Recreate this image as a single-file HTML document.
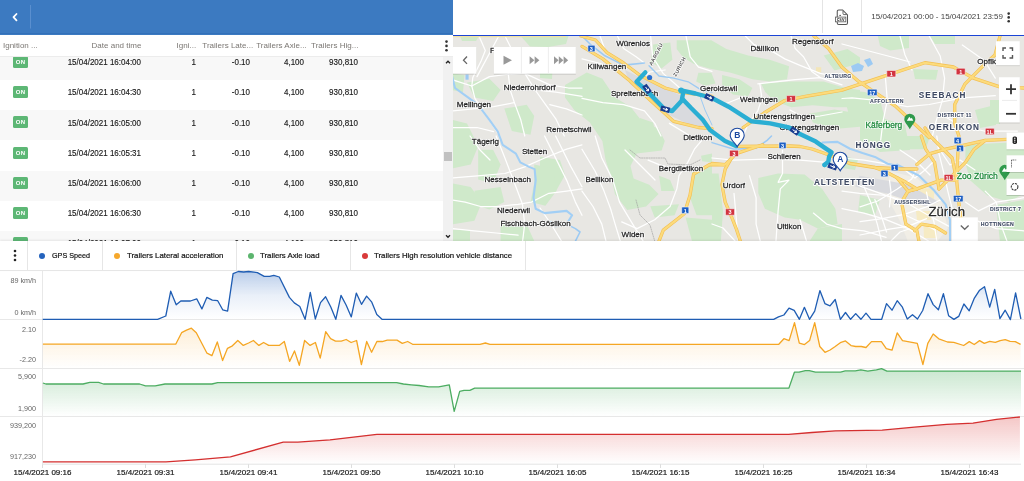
<!DOCTYPE html>
<html><head><meta charset="utf-8"><style>
*{box-sizing:border-box}
html,body{margin:0;padding:0}
body{width:1024px;height:481px;overflow:hidden;position:relative;background:#fff;font-family:"Liberation Sans", sans-serif;-webkit-font-smoothing:antialiased;}
.abs{position:absolute}
#lhead{position:absolute;left:0;top:0;width:453px;height:34.5px;background:#3c7ac1}
#tbl{position:absolute;left:0;top:34.5px;width:453px;height:206.5px;overflow:hidden;background:#fff}
.row{position:absolute;left:0;width:443px;height:30.2px}
.badge{position:absolute;left:13px;width:15px;height:12px;background:#5db775;border-radius:1.5px;color:#fff;font-size:6px;font-weight:bold;line-height:12px;text-align:center;letter-spacing:0.2px}
.cell{position:absolute;width:120px;text-align:right;font-size:8.7px;line-height:10px;color:#1a1a1a;white-space:nowrap;-webkit-text-stroke:0.15px #1a1a1a;transform:scaleX(0.92);transform-origin:100% 50%}
.hd{position:absolute;font-size:8px;line-height:10px;color:#7b7773;white-space:nowrap}
.lg{position:absolute;top:251px;font-size:8px;line-height:10px;color:#111;white-space:nowrap;-webkit-text-stroke:0.2px #111}
.dot{position:absolute;top:253px;width:6.2px;height:6.2px;border-radius:50%}
.yl{position:absolute;width:40px;text-align:right;font-size:8px;line-height:10px;color:#666;white-space:nowrap;left:-3.6px;transform:scaleX(0.9);transform-origin:100% 50%}
.xl{position:absolute;top:468.3px;width:80px;text-align:center;font-size:8px;line-height:10px;color:#1a1a1a;white-space:nowrap;-webkit-text-stroke:0.2px #1a1a1a}
</style></head><body>
<div id="root" style="position:absolute;left:0;top:0;width:1024px;height:481px;overflow:hidden;will-change:transform">
<div id="lhead"><div style="position:absolute;left:0;top:33.3px;width:453px;height:1.2px;background:#3270b9"></div>
  <svg class="abs" style="left:0;top:0" width="40" height="35"><polyline points="16.5,14 13.5,17.2 16.5,20.4" fill="none" stroke="#fff" stroke-width="1.8" stroke-linecap="round" stroke-linejoin="round"/><line x1="30.5" y1="5" x2="30.5" y2="28.5" stroke="#5a8fcf" stroke-width="1"/></svg>
</div>
<div id="tbl">
  <div style="position:absolute;left:0;top:0;width:453px;height:22px;background:#fff;border-bottom:1px solid #ececec;z-index:2">
    <div class="hd" style="left:3px;top:6px">Ignition ...</div>
    <div class="hd" style="left:91.6px;top:6px">Date and time</div>
    <div class="hd" style="left:176.6px;top:6px">Igni...</div>
    <div class="hd" style="left:202.3px;top:6px">Trailers Late...</div>
    <div class="hd" style="left:256.2px;top:6px">Trailers Axle...</div>
    <div class="hd" style="left:311.1px;top:6px">Trailers Hig...</div>
    <svg class="abs" style="left:443px;top:5px" width="8" height="13"><circle cx="3.5" cy="1.6" r="1.3" fill="#333"/><circle cx="3.5" cy="5.9" r="1.3" fill="#333"/><circle cx="3.5" cy="10.2" r="1.3" fill="#333"/></svg>
  </div>
  <div style="position:absolute;left:0;top:-34.5px;width:453px;height:481px">
  <div class="row" style="top:49.8px;background:#f8f8f8"></div>
<div class="badge" style="top:56.0px">ON</div>
<div class="cell" style="top:57.2px;left:21.4px">15/04/2021 16:04:00</div>
<div class="cell" style="top:57.2px;left:75.5px">1</div>
<div class="cell" style="top:57.2px;left:130.0px">-0.10</div>
<div class="cell" style="top:57.2px;left:184.3px">4,100</div>
<div class="cell" style="top:57.2px;left:238.3px">930,810</div>
<div class="row" style="top:80.0px;background:#ffffff"></div>
<div class="badge" style="top:86.2px">ON</div>
<div class="cell" style="top:87.4px;left:21.4px">15/04/2021 16:04:30</div>
<div class="cell" style="top:87.4px;left:75.5px">1</div>
<div class="cell" style="top:87.4px;left:130.0px">-0.10</div>
<div class="cell" style="top:87.4px;left:184.3px">4,100</div>
<div class="cell" style="top:87.4px;left:238.3px">930,810</div>
<div class="row" style="top:110.2px;background:#f8f8f8"></div>
<div class="badge" style="top:116.4px">ON</div>
<div class="cell" style="top:117.6px;left:21.4px">15/04/2021 16:05:00</div>
<div class="cell" style="top:117.6px;left:75.5px">1</div>
<div class="cell" style="top:117.6px;left:130.0px">-0.10</div>
<div class="cell" style="top:117.6px;left:184.3px">4,100</div>
<div class="cell" style="top:117.6px;left:238.3px">930,810</div>
<div class="row" style="top:140.4px;background:#ffffff"></div>
<div class="badge" style="top:146.6px">ON</div>
<div class="cell" style="top:147.8px;left:21.4px">15/04/2021 16:05:31</div>
<div class="cell" style="top:147.8px;left:75.5px">1</div>
<div class="cell" style="top:147.8px;left:130.0px">-0.10</div>
<div class="cell" style="top:147.8px;left:184.3px">4,100</div>
<div class="cell" style="top:147.8px;left:238.3px">930,810</div>
<div class="row" style="top:170.6px;background:#f8f8f8"></div>
<div class="badge" style="top:176.8px">ON</div>
<div class="cell" style="top:178.0px;left:21.4px">15/04/2021 16:06:00</div>
<div class="cell" style="top:178.0px;left:75.5px">1</div>
<div class="cell" style="top:178.0px;left:130.0px">-0.10</div>
<div class="cell" style="top:178.0px;left:184.3px">4,100</div>
<div class="cell" style="top:178.0px;left:238.3px">930,810</div>
<div class="row" style="top:200.8px;background:#ffffff"></div>
<div class="badge" style="top:207.0px">ON</div>
<div class="cell" style="top:208.2px;left:21.4px">15/04/2021 16:06:30</div>
<div class="cell" style="top:208.2px;left:75.5px">1</div>
<div class="cell" style="top:208.2px;left:130.0px">-0.10</div>
<div class="cell" style="top:208.2px;left:184.3px">4,100</div>
<div class="cell" style="top:208.2px;left:238.3px">930,810</div>
<div class="row" style="top:231.0px;background:#f8f8f8"></div>
<div class="badge" style="top:237.2px">ON</div>
<div class="cell" style="top:238.4px;left:21.4px">15/04/2021 16:07:00</div>
<div class="cell" style="top:238.4px;left:75.5px">1</div>
<div class="cell" style="top:238.4px;left:130.0px">-0.10</div>
<div class="cell" style="top:238.4px;left:184.3px">4,100</div>
<div class="cell" style="top:238.4px;left:238.3px">930,810</div>
  </div>
  <div style="position:absolute;left:443px;top:22px;width:10px;height:184px;background:#f1f1f1"></div>
  <div style="position:absolute;left:444.3px;top:117px;width:7.4px;height:9px;background:#c1c1c1"></div>
  <svg class="abs" style="left:443px;top:22px" width="10" height="184"><polyline points="3,6.2 5,4.2 7,6.2" fill="none" stroke="#222" stroke-width="1.3"/><polyline points="3,178.3 5,180.3 7,178.3" fill="none" stroke="#222" stroke-width="1.3"/></svg>
</div>

<!-- top right bar -->
<div class="abs" style="left:453px;top:0;width:571px;height:34.7px;background:#fff"></div>
<div class="abs" style="left:453px;top:34.7px;width:571px;height:1.3px;background:#1b44d6"></div>
<div class="abs" style="left:822px;top:0;width:1px;height:33px;background:#e4e4e4"></div>
<div class="abs" style="left:861px;top:0;width:1px;height:33px;background:#e4e4e4"></div>
<svg class="abs" style="left:834px;top:8.5px" width="18" height="17"><path d="M4.75,1 H8.6 L13.5,5.9 V14 Q13.5,15.5 12,15.5 H4.75 Q3.25,15.5 3.25,14 V2.5 Q3.25,1 4.75,1 Z" fill="none" stroke="#555" stroke-width="1.05"/><path d="M9,1.8 V4.6 Q9,5.6 10,5.6 H12.8" fill="none" stroke="#555" stroke-width="0.9"/><path d="M5.3,6.4 H7" stroke="#444" stroke-width="0.9"/><rect x="1.5" y="8.1" width="10.3" height="4.7" fill="#fff" stroke="#666" stroke-width="0.9"/><text x="6.65" y="11.9" font-size="4.6" text-anchor="middle" fill="#333" font-family="Liberation Sans" font-weight="bold">csv</text></svg>
<div class="abs" style="left:871.3px;top:12px;font-size:8px;line-height:10px;color:#444;white-space:nowrap">15/04/2021 00:00 - 15/04/2021 23:59</div>
<svg class="abs" style="left:1005px;top:11px" width="8" height="13"><circle cx="3.7" cy="2.6" r="1.3" fill="#333"/><circle cx="3.7" cy="6.4" r="1.3" fill="#333"/><circle cx="3.7" cy="10.2" r="1.3" fill="#333"/></svg>

<!-- MAP -->
<div id="map" class="abs" style="left:453px;top:36px;width:571px;height:205px;overflow:hidden;background:#e6e3df">
<svg width="571" height="205" viewBox="453 36 571 205" style="position:absolute;left:0;top:0">
<defs><filter id="sh" x="-20%" y="-20%" width="140%" height="140%"><feDropShadow dx="0" dy="0.6" stdDeviation="0.7" flood-opacity="0.25"/></filter></defs>
<rect x="453" y="36" width="571" height="205" fill="#e8e7e3"/>
<polygon points="520.6,36 568.5,36 566,44 548,47 530,46.4" fill="#cfe9ca" />
<polygon points="460,36 479,36 476,41 462,41" fill="#cfe9ca" />
<polygon points="452,73.4 464.5,75 463,92.2 452,90" fill="#cfe9ca" />
<polygon points="467,82.4 489.4,78.7 500.6,89.9 493.1,101.1 474.4,97.4" fill="#cfe9ca" />
<polygon points="504.3,108.6 526.7,104.8 534.2,116 530.5,134.7 511.8,131" fill="#cfe9ca" />
<polygon points="452,119.8 467,123.5 478.2,146 470.7,164.6 452,168.4" fill="#cfe9ca" />
<polygon points="540,66 552.5,68 552,79 540,78" fill="#cfe9ca" />
<polygon points="565,85 586.8,72.5 602.4,78.7 614.9,97.4 630.5,106.8 642.9,122.4 658.5,128.6 664.8,141.1 661.6,150.5 636.7,153.6 630.5,166.1 633.6,178.5 649.2,184.8 658.5,194.1 646.1,206.6 627.3,210 614.9,194.1 611.7,178.5 605.5,159.8 602.4,141.1 589.9,122.4 574.3,109.9 565,97.4" fill="#cfe9ca" />
<polygon points="540,156.7 560,160 565,175 556,191 540,188" fill="#cfe9ca" />
<polygon points="653,44.6 670.3,42.5 672.4,59.8 661.6,68.4 650.8,61.9" fill="#cfe9ca" />
<polygon points="676.7,40.3 711.3,40.3 726.4,49 748.1,55.5 769.7,59.8 789.1,66.3 787,79.2 769.7,81.4 752.4,79.2 730.8,72.7 709.2,68.4 694,64.1 683.2,57.6 676.7,49" fill="#cfe9ca" />
<polygon points="698.4,72.7 711.3,72.7 715.6,83.5 704.8,85.7 696.2,81.4" fill="#cfe9ca" />
<polygon points="722.1,74.9 739.4,79.2 752.4,87.9 748.1,96.5 732.9,94.4 722.1,85.7" fill="#cfe9ca" />
<polygon points="761,83.5 791.3,81.4 823.7,81.4 845.3,87.9 860,90 860,107.3 834.5,107.3 812.9,105.2 791.3,107.3 774,100.8 765.4,92.2" fill="#cfe9ca" />
<polygon points="808.6,113.8 834.5,109.5 860,113.8 860,126.8 834.5,128.9 812.9,122.4" fill="#cfe9ca" />
<polygon points="823.7,55.5 847.5,49 860,57.6 860,64 850,66 834.5,70.6" fill="#cfe9ca" />
<polygon points="640,118.1 653,122.4 657.3,140 640,140" fill="#cfe9ca" />
<polygon points="842.5,90 865,92 880,100 885,119 870,122 850,119" fill="#cfe9ca" />
<polygon points="860,119 885,119 905,125 910,150 880,152 860,140" fill="#cfe9ca" />
<polygon points="877.8,36 909,36 909,48 890,50.5 880,46" fill="#cfe9ca" />
<polygon points="913,69 938,70 936,79.7 915,79" fill="#cfe9ca" />
<polygon points="830,54.7 848.7,56 848.7,65 830,65" fill="#cfe9ca" />
<polygon points="990,100 1000,100 1000,124 990,124" fill="#cfe9ca" />
<polygon points="930,36 955,36 955,44 935,44" fill="#cfe9ca" />
<polygon points="975,110 995,105 996,125 980,128" fill="#cfe9ca" />
<polygon points="478.2,149.7 493.1,149.7 500.6,164.6 493.1,183.3 478.2,179.6" fill="#cfe9ca" />
<polygon points="452,183.3 470.7,187.1 481.9,202 474.4,220.7 452,224.4" fill="#cfe9ca" />
<polygon points="474.4,190.8 500.6,187.1 504.3,202 489.4,209.5 478.2,205.7" fill="#cfe9ca" />
<polygon points="534.2,164.6 552.9,168.4 556.6,190.8 545.4,205.7 530.5,202 534.2,183.3" fill="#cfe9ca" />
<polygon points="500.6,220.7 526.7,224.4 534.2,241 500.6,241" fill="#cfe9ca" />
<polygon points="452,230 470,230 470,241 452,241" fill="#cfe9ca" />
<polygon points="692.2,171.3 712,162.4 712,215.3 696.6,215.3 690,197.7" fill="#cfe9ca" />
<polygon points="701,155.8 712,153.6 712,162.4 702.1,161.3" fill="#cfe9ca" />
<polygon points="685.6,217.5 712,219.7 712,242 692.2,242" fill="#cfe9ca" />
<polygon points="650.3,206.3 679,204.3 674.6,215.3 654.7,217.5" fill="#cfe9ca" />
<polygon points="659.1,175.7 670.1,180.1 674.6,191.1 661.3,191.1" fill="#cfe9ca" />
<polygon points="758.3,177.9 778.1,173.5 804.6,174.6 822.2,188.9 835.4,208.7 837.6,224.1 817.8,228.6 800.1,219.7 784.7,217.5 764.9,208.7 758.3,193.3" fill="#cfe9ca" />
<polygon points="712,173.5 718.6,173.5 723,210.9 720.8,242 712,242" fill="#cfe9ca" />
<polygon points="817.8,228.6 842,224.1 842,242 809,242" fill="#cfe9ca" />
<polygon points="965.4,144.8 1009.5,142.6 1024,149.2 1024,193.3 1009.5,202.1 987.4,195.5 969.8,180.1 965.4,162.4" fill="#cfe9ca" />
<polygon points="892.7,136 930.1,136 925.7,149.2 897.1,149.2" fill="#cfe9ca" />
<polygon points="996,205 1024,200 1024,242 1000,242" fill="#cfe9ca" />
<polygon points="842,155 858,160 855,170 842,168" fill="#cfe9ca" />
<polygon points="860,195 880,200 875,215 858,212" fill="#cfe9ca" />
<polygon points="625,70 645,80 680,95 706.8,123.4 698.5,129 665.2,113 630,84" fill="#d9dade" />
<polygon points="890.5,171.3 916.9,177.9 941.2,199.9 947.8,228.6 936.8,242 908.1,242 899.3,219.7 886.1,195.5" fill="#f1eee6" />
<polygon points="816,67.2 821.2,67.2 821.2,72.4 816,72.4" fill="#f3e6b8" />
<polygon points="919,187.7 934,189 934,202.5 921,201" fill="#f6ebc4" />
<polygon points="916,211 931,211 931,220 917,220" fill="#f6ebc4" />
<polygon points="923.5,226 936.8,226 936.8,238 924,238" fill="#f6ebc4" />
<polygon points="859.6,175.7 908.1,184.5 938.9,202.1 925.7,206.5 886.1,193.3 855.2,186.7" fill="#d9dade" />
<polyline points="479,36 485.3,50.6 481.1,61 472.8,77.6 471.8,86 474.9,98.4 483.2,110.9 491.5,123.4 499.8,136" fill="none" stroke="#ffffff" stroke-width="1.25" stroke-linejoin="round" stroke-linecap="round" />
<polyline points="452,79.7 471.8,86" fill="none" stroke="#ffffff" stroke-width="1.25" stroke-linejoin="round" stroke-linecap="round" />
<polyline points="471.8,86 489.4,76.6 506.1,74.5 524.8,73.4 549.8,84.9 568.5,88 582,88" fill="none" stroke="#ffffff" stroke-width="1.25" stroke-linejoin="round" stroke-linecap="round" />
<polyline points="508.2,73.4 510.2,90 514.4,102.6 520.6,119.2 524.8,136" fill="none" stroke="#ffffff" stroke-width="1.25" stroke-linejoin="round" stroke-linecap="round" />
<polyline points="524.8,73.4 535.2,90 545.6,104.6 556,119.2 564.3,136" fill="none" stroke="#ffffff" stroke-width="1.25" stroke-linejoin="round" stroke-linecap="round" />
<polyline points="452,110.9 472.8,108.8 493.6,106.7 514.4,102.6" fill="none" stroke="#ffffff" stroke-width="1.25" stroke-linejoin="round" stroke-linecap="round" />
<polyline points="535.2,90 556,92.2 582,96.3" fill="none" stroke="#ffffff" stroke-width="1.25" stroke-linejoin="round" stroke-linecap="round" />
<polyline points="452,127.5 477,127.5 493.6,131.7" fill="none" stroke="#ffffff" stroke-width="1.25" stroke-linejoin="round" stroke-linecap="round" />
<polyline points="549.8,104.6 566.4,108.8 582,115" fill="none" stroke="#ffffff" stroke-width="1.25" stroke-linejoin="round" stroke-linecap="round" />
<polyline points="498.8,36 477,76.6" fill="none" stroke="#ffffff" stroke-width="1.25" stroke-linejoin="round" stroke-linecap="round" />
<polyline points="505,36 512,50 520,60" fill="none" stroke="#ffffff" stroke-width="1.25" stroke-linejoin="round" stroke-linecap="round" />
<polyline points="617.4,36 623.6,48.5 636.1,56.8 644.4,63" fill="none" stroke="#ffffff" stroke-width="1.25" stroke-linejoin="round" stroke-linecap="round" />
<polyline points="582,58.9 598.6,63 619.4,70.3" fill="none" stroke="#ffffff" stroke-width="1.25" stroke-linejoin="round" stroke-linecap="round" />
<polyline points="582,98.4 602.8,102.6 623.6,104.6 644.4,110.9 654.8,123.4 661,136" fill="none" stroke="#ffffff" stroke-width="1.25" stroke-linejoin="round" stroke-linecap="round" />
<polyline points="650.6,36 652.7,56.8 663.1,73.4 679.8,88" fill="none" stroke="#ffffff" stroke-width="1.25" stroke-linejoin="round" stroke-linecap="round" />
<polyline points="686,36 690.2,56.8 698.5,67.2 712,71.4" fill="none" stroke="#ffffff" stroke-width="1.25" stroke-linejoin="round" stroke-linecap="round" />
<polyline points="669.4,123.4 690.2,136" fill="none" stroke="#ffffff" stroke-width="1.25" stroke-linejoin="round" stroke-linecap="round" />
<polyline points="600,36 605,50 620,62" fill="none" stroke="#ffffff" stroke-width="1.25" stroke-linejoin="round" stroke-linecap="round" />
<polyline points="640,80 650,72 665,70" fill="none" stroke="#ffffff" stroke-width="1.25" stroke-linejoin="round" stroke-linecap="round" />
<polyline points="745.3,36 753.6,44.3 774.4,52.6 784.8,58.9 799.4,65.1 820.2,73.4 842,77.6" fill="none" stroke="#ffffff" stroke-width="1.25" stroke-linejoin="round" stroke-linecap="round" />
<polyline points="757.8,83.8 795.2,79.7 820.2,77.6 842,84.9" fill="none" stroke="#ffffff" stroke-width="1.25" stroke-linejoin="round" stroke-linecap="round" />
<polyline points="759.8,83.8 761.9,98.4 757.8,110.9 747.4,125.4 743.2,136" fill="none" stroke="#ffffff" stroke-width="1.25" stroke-linejoin="round" stroke-linecap="round" />
<polyline points="791,36 795.2,48.5 803.5,56.8 811.8,71.4 820.2,77.6" fill="none" stroke="#ffffff" stroke-width="1.25" stroke-linejoin="round" stroke-linecap="round" />
<polyline points="712,100 725,104 735,100 745,96" fill="none" stroke="#ffffff" stroke-width="1.25" stroke-linejoin="round" stroke-linecap="round" />
<polyline points="790,110 805,118 820,116 842,112" fill="none" stroke="#ffffff" stroke-width="1.25" stroke-linejoin="round" stroke-linecap="round" />
<polyline points="885.1,73.7 887.3,100.1 882.9,122.2 880.7,140" fill="none" stroke="#ffffff" stroke-width="1.25" stroke-linejoin="round" stroke-linecap="round" />
<polyline points="842,98.5 852,97.9 874.1,100.1 907.2,106.7 929.2,104.5 962.3,97.9 995.3,95.7" fill="none" stroke="#ffffff" stroke-width="1.25" stroke-linejoin="round" stroke-linecap="round" />
<polyline points="929.2,36 940.2,56 944.6,78.1 942.4,100.1 935.8,122.2 931.4,140" fill="none" stroke="#ffffff" stroke-width="1.25" stroke-linejoin="round" stroke-linecap="round" />
<polyline points="962.3,45 984.3,60.5 995.3,78.1" fill="none" stroke="#ffffff" stroke-width="1.25" stroke-linejoin="round" stroke-linecap="round" />
<polyline points="946.8,117.8 962.3,126.6 984.3,131 1017.4,131" fill="none" stroke="#ffffff" stroke-width="1.25" stroke-linejoin="round" stroke-linecap="round" />
<polyline points="842,44 865,50 888,56 910,62" fill="none" stroke="#ffffff" stroke-width="1.25" stroke-linejoin="round" stroke-linecap="round" />
<polyline points="900,36 905,55 912,70" fill="none" stroke="#ffffff" stroke-width="1.25" stroke-linejoin="round" stroke-linecap="round" />
<polyline points="452,177.9 480.6,175.7 504.9,173.5 524.7,166.9 544.6,158 566.6,149.2 582,144.8" fill="none" stroke="#ffffff" stroke-width="1.25" stroke-linejoin="round" stroke-linecap="round" />
<polyline points="496.1,136 504.9,158 515.9,186.7 522.5,204.3 524.7,224.1 522.5,242" fill="none" stroke="#ffffff" stroke-width="1.25" stroke-linejoin="round" stroke-linecap="round" />
<polyline points="452,199.9 465.2,202.1 480.6,206.5 498.3,206.5 518.1,204.3 531.3,202.1 548.9,193.3 566.6,191.1 582,188.9" fill="none" stroke="#ffffff" stroke-width="1.25" stroke-linejoin="round" stroke-linecap="round" />
<polyline points="544.6,136 553.4,153.6 566.6,180.1 575.4,202.1 582,215.3" fill="none" stroke="#ffffff" stroke-width="1.25" stroke-linejoin="round" stroke-linecap="round" />
<polyline points="555.6,136 571,166.9 582,186.7" fill="none" stroke="#ffffff" stroke-width="1.25" stroke-linejoin="round" stroke-linecap="round" />
<polyline points="452,228.6 474,230.8 496.1,233 518.1,235.2" fill="none" stroke="#ffffff" stroke-width="1.25" stroke-linejoin="round" stroke-linecap="round" />
<polyline points="540,208 551,224 562,242" fill="none" stroke="#ffffff" stroke-width="1.25" stroke-linejoin="round" stroke-linecap="round" />
<polyline points="470,136 480,150 490,160" fill="none" stroke="#ffffff" stroke-width="1.25" stroke-linejoin="round" stroke-linecap="round" />
<polyline points="582,149.2 595.2,171.3 604,191.1 610.6,208.7 615.1,224.1 620.6,242" fill="none" stroke="#ffffff" stroke-width="1.25" stroke-linejoin="round" stroke-linecap="round" />
<polyline points="595.2,136 601.8,158 612.9,180.1 619.5,202.1 632.7,224.1 643.7,242" fill="none" stroke="#ffffff" stroke-width="1.25" stroke-linejoin="round" stroke-linecap="round" />
<polyline points="582,191.1 593,206.5 601.8,224.1 606.2,242" fill="none" stroke="#ffffff" stroke-width="1.25" stroke-linejoin="round" stroke-linecap="round" />
<polyline points="621.7,221.9 637.1,228.6 654.7,219.7 670.1,206.5 676.8,188.9 679,175.7 687.8,162.4 694.4,149.2 705.4,136" fill="none" stroke="#ffffff" stroke-width="1.25" stroke-linejoin="round" stroke-linecap="round" />
<polyline points="648.1,160.2 659.1,164.6 674.6,169.1 692.2,171.3" fill="none" stroke="#ffffff" stroke-width="1.25" stroke-linejoin="round" stroke-linecap="round" />
<polyline points="625,150 635,160 645,170 655,180" fill="none" stroke="#ffffff" stroke-width="1.25" stroke-linejoin="round" stroke-linecap="round" />
<polyline points="782.5,150 782.5,173.5 778.1,182.3 789,180.1 780.3,188.9 778.1,210.9 775.9,242" fill="none" stroke="#ffffff" stroke-width="1.25" stroke-linejoin="round" stroke-linecap="round" />
<polyline points="712,158 734,160.2 767.1,159.1 800.1,160.2 826.6,162.4 842,166.9" fill="none" stroke="#ffffff" stroke-width="1.25" stroke-linejoin="round" stroke-linecap="round" />
<polyline points="749.5,175.7 756.1,197.7 756.1,224.1 760.5,242" fill="none" stroke="#ffffff" stroke-width="1.25" stroke-linejoin="round" stroke-linecap="round" />
<polyline points="734,193.3 738.4,242" fill="none" stroke="#ffffff" stroke-width="1.25" stroke-linejoin="round" stroke-linecap="round" />
<polyline points="813.4,213.1 826.6,224.1 842,228.6" fill="none" stroke="#ffffff" stroke-width="1.25" stroke-linejoin="round" stroke-linecap="round" />
<polyline points="800.1,219.7 806.8,242" fill="none" stroke="#ffffff" stroke-width="1.25" stroke-linejoin="round" stroke-linecap="round" />
<polyline points="712,224 723,228 736,242" fill="none" stroke="#ffffff" stroke-width="1.25" stroke-linejoin="round" stroke-linecap="round" />
<polyline points="842,158 864,160.2 890.5,164.6" fill="none" stroke="#ffffff" stroke-width="1.25" stroke-linejoin="round" stroke-linecap="round" />
<polyline points="842,191.1 859.6,193.3 886.1,195.5 908.1,202.1" fill="none" stroke="#ffffff" stroke-width="1.25" stroke-linejoin="round" stroke-linecap="round" />
<polyline points="842,208.7 864,213.1 886.1,219.7 908.1,228.6 930.1,242" fill="none" stroke="#ffffff" stroke-width="1.25" stroke-linejoin="round" stroke-linecap="round" />
<polyline points="864,186.7 870.6,202.1 877.3,224.1 881.7,242" fill="none" stroke="#ffffff" stroke-width="1.25" stroke-linejoin="round" stroke-linecap="round" />
<polyline points="842,228.6 864,230.8 886.1,237.4" fill="none" stroke="#ffffff" stroke-width="1.25" stroke-linejoin="round" stroke-linecap="round" />
<polyline points="965.4,202.1 978.6,210.9 996.3,202.1 1024,197.7" fill="none" stroke="#ffffff" stroke-width="1.25" stroke-linejoin="round" stroke-linecap="round" />
<polyline points="974.2,219.7 996.3,228.6 1024,230.8" fill="none" stroke="#ffffff" stroke-width="1.25" stroke-linejoin="round" stroke-linecap="round" />
<polyline points="936.8,136 939,153.6 943.4,171.3 947.8,191.1 952.2,208.7" fill="none" stroke="#ffffff" stroke-width="1.25" stroke-linejoin="round" stroke-linecap="round" />
<polyline points="985.2,191.1 996.3,202.1 1000.7,224.1 1007.3,242" fill="none" stroke="#ffffff" stroke-width="1.25" stroke-linejoin="round" stroke-linecap="round" />
<polyline points="900,150 915,160 930,175" fill="none" stroke="#ffffff" stroke-width="1.25" stroke-linejoin="round" stroke-linecap="round" />
<polyline points="905,215 920,222 935,230" fill="none" stroke="#ffffff" stroke-width="1.25" stroke-linejoin="round" stroke-linecap="round" />
<polyline points="890,242 900,232 912,228" fill="none" stroke="#ffffff" stroke-width="1.25" stroke-linejoin="round" stroke-linecap="round" />
<polyline points="860,186.2 889.5,196.6 908.7,204 926.5,214.3 948.6,226.1" fill="none" stroke="#ffffff" stroke-width="1.25" stroke-linejoin="round" stroke-linecap="round" />
<polyline points="860,206.9 877.7,201 896.9,189.2 911.7,178.9 916.1,170" fill="none" stroke="#ffffff" stroke-width="1.25" stroke-linejoin="round" stroke-linecap="round" />
<polyline points="860,221.7 882.2,218.7 904.3,214.3 926.5,206.9 941.2,199.5" fill="none" stroke="#ffffff" stroke-width="1.25" stroke-linejoin="round" stroke-linecap="round" />
<polyline points="860,235 889.5,229.1 908.7,226.1 926.5,218.7" fill="none" stroke="#ffffff" stroke-width="1.25" stroke-linejoin="round" stroke-linecap="round" />
<polyline points="889.5,180.3 891,192.2 889.5,206.9" fill="none" stroke="#ffffff" stroke-width="1.25" stroke-linejoin="round" stroke-linecap="round" />
<polyline points="874.8,199.5 880.7,214.3 886.6,232" fill="none" stroke="#ffffff" stroke-width="1.25" stroke-linejoin="round" stroke-linecap="round" />
<polyline points="926.5,192.2 929.4,206.9 933.9,221.7 936.8,241" fill="none" stroke="#ffffff" stroke-width="1.25" stroke-linejoin="round" stroke-linecap="round" />
<polyline points="940,150 950,165 960,160 975,170" fill="none" stroke="#ffffff" stroke-width="1.25" stroke-linejoin="round" stroke-linecap="round" />
<polyline points="905,170 915,178 925,170 935,160" fill="none" stroke="#ffffff" stroke-width="1.25" stroke-linejoin="round" stroke-linecap="round" />
<polyline points="630,150 640,158 665,158 668,164 690,165 700,160" fill="none" stroke="#9a9a9a" stroke-width="0.6" stroke-linejoin="round" stroke-linecap="round" stroke-dasharray="1.2,1.2"/>
<polyline points="636,200 640,215 650,225 655,242" fill="none" stroke="#9a9a9a" stroke-width="0.6" stroke-linejoin="round" stroke-linecap="round" stroke-dasharray="1.2,1.2"/>
<polyline points="452,76 455,88 466.6,96.3 478.2,104.8 489.4,119.8 497.8,131.7 502.7,144.8 515.9,153.6 520.3,162.4 529.1,166.9 534.6,169.1 535.7,180.1 533.5,197.7 535.7,208.7 544.6,213.1 566.6,210.9 572.1,215.3 566.6,224.1 555.6,226.3 551.2,221.9" fill="none" stroke="#a2cff5" stroke-width="2.1" stroke-linejoin="round" stroke-linecap="round" />
<polyline points="566.6,224.1 575.4,228.6 580,232 575,242" fill="none" stroke="#9ccaf3" stroke-width="1.6" stroke-linejoin="round" stroke-linecap="round" />
<polyline points="582,36 590.3,44.3 604.9,55.8 623.6,65.1 644.4,63" fill="none" stroke="#9ccaf3" stroke-width="1.6" stroke-linejoin="round" stroke-linecap="round" />
<polyline points="649,65.8 659,76 673.7,78.2 688.2,81.8 699.9,89.1 712,92" fill="none" stroke="#9ccaf3" stroke-width="1.3" stroke-linejoin="round" stroke-linecap="round" />
<polyline points="700,96 705,110 712,125" fill="none" stroke="#9ccaf3" stroke-width="1.0" stroke-linejoin="round" stroke-linecap="round" />
<polyline points="712,142.6 734,149.2 756.1,148.1 767.1,140.4 771.5,136" fill="none" stroke="#9ccaf3" stroke-width="1.5" stroke-linejoin="round" stroke-linecap="round" />
<polyline points="822.5,142.5 837.5,141.9 850,148.75 862.5,153.1 875,156.9 887.5,163.75 900,166.25 897.1,164.6 919.1,175.7 934.6,191.1 945.6,204.3 950,219.7 950,242" fill="none" stroke="#a2cff5" stroke-width="2.1" stroke-linejoin="round" stroke-linecap="round" />
<polygon points="851,66 858,63 864,66 862,71 853,72" fill="#9ccaf3" />
<polygon points="864,60 870,58 873,64 868,67" fill="#9ccaf3" />
<polygon points="465.5,74.5 468.6,74.5 468.6,79.7 465.5,79.7" fill="#9ccaf3" />
<polyline points="581,36 595.5,40 607,52.6 623.6,63 640.2,75.5 665.2,88 679.8,92.2 712,96.3" fill="none" stroke="#f3bf52" stroke-width="3.3" stroke-linejoin="round" stroke-linecap="round" />
<polyline points="582,46.4 602.8,58.9 629.8,80.7 650.6,100.5 673.5,121.3 698.5,127.5 712,128.6" fill="none" stroke="#f3bf52" stroke-width="3.3" stroke-linejoin="round" stroke-linecap="round" />
<polyline points="743.2,127.5 764,113 784.8,100.5 805.6,96.3 842,90.1 885,75.9 924.8,62.7 953.5,67 973.3,78.1 999.8,86.9 1024,88" fill="none" stroke="#f3bf52" stroke-width="3.3" stroke-linejoin="round" stroke-linecap="round" />
<polyline points="813.9,36 828.5,48.5 842,67.2 858.7,81.4 896.1,106.7 929.2,137.6" fill="none" stroke="#f3bf52" stroke-width="3.3" stroke-linejoin="round" stroke-linecap="round" />
<polyline points="737.8,146.3 790,146 800,146.5 812,149 825,153.5 850,163.5 875,167.5 900,169 916.9,169" fill="none" stroke="#f3bf52" stroke-width="3.3" stroke-linejoin="round" stroke-linecap="round" />
<polyline points="875,167.5 886.1,172 905.9,182.3 916.9,188.9" fill="none" stroke="#f3bf52" stroke-width="3.3" stroke-linejoin="round" stroke-linecap="round" />
<polyline points="712,163.5 725.2,164.6 736.2,153.6 762.7,144.8" fill="none" stroke="#f3bf52" stroke-width="3.3" stroke-linejoin="round" stroke-linecap="round" />
<polyline points="734,153.6 725.2,169.1 721.9,184.5 725.2,202.1 731.8,217.5 736.2,228.6 740.6,242" fill="none" stroke="#f3bf52" stroke-width="3.3" stroke-linejoin="round" stroke-linecap="round" />
<polyline points="723.8,164.9 709.8,164.5 693.6,174.2 690,195.2 684.2,213.8 663.3,230.1 658.6,242" fill="none" stroke="#f3bf52" stroke-width="3.3" stroke-linejoin="round" stroke-linecap="round" />
<polyline points="1000,36 995,55 983.8,65.1 965.1,83.8 954.7,104.6 954.7,123.3 958.9,136 958,150 956.6,180.1 958.8,202.1 961,219.7" fill="none" stroke="#f3bf52" stroke-width="3.3" stroke-linejoin="round" stroke-linecap="round" />
<polyline points="925,128 930.1,136 939,144.8 952.2,158 956.6,180.1" fill="none" stroke="#f3bf52" stroke-width="3.3" stroke-linejoin="round" stroke-linecap="round" />
<polyline points="916.9,188.9 908.1,191.1 901.5,202.1 905.9,224.1 916.9,230.8 919.1,242" fill="none" stroke="#f3bf52" stroke-width="3.3" stroke-linejoin="round" stroke-linecap="round" />
<polyline points="916.9,164.6 930.1,153.6 945.6,149.2 965.4,144.8 985.2,140.4 1007.3,139.3 1024,139.3" fill="none" stroke="#f3bf52" stroke-width="3.3" stroke-linejoin="round" stroke-linecap="round" />
<polyline points="939,188.9 952.2,175.7 965.4,162.4 974.2,149.2 985.2,140.4" fill="none" stroke="#f3bf52" stroke-width="3.3" stroke-linejoin="round" stroke-linecap="round" />
<polyline points="897.1,177.9 908.1,191.1 916.9,188.9 941.2,180.1 956.6,180.1" fill="none" stroke="#f3bf52" stroke-width="3.3" stroke-linejoin="round" stroke-linecap="round" />
<polyline points="914.7,230.8 921.3,224.1 934.6,226.3 945.6,233" fill="none" stroke="#f3bf52" stroke-width="3.3" stroke-linejoin="round" stroke-linecap="round" />
<polyline points="921.3,136 925.7,149.2 934.6,162.4 939,188.9" fill="none" stroke="#f3bf52" stroke-width="3.3" stroke-linejoin="round" stroke-linecap="round" />
<polyline points="581,36 595.5,40 607,52.6 623.6,63 640.2,75.5 665.2,88 679.8,92.2 712,96.3" fill="none" stroke="#fcdb7c" stroke-width="2.1" stroke-linejoin="round" stroke-linecap="round" />
<polyline points="582,46.4 602.8,58.9 629.8,80.7 650.6,100.5 673.5,121.3 698.5,127.5 712,128.6" fill="none" stroke="#fcdb7c" stroke-width="2.1" stroke-linejoin="round" stroke-linecap="round" />
<polyline points="743.2,127.5 764,113 784.8,100.5 805.6,96.3 842,90.1 885,75.9 924.8,62.7 953.5,67 973.3,78.1 999.8,86.9 1024,88" fill="none" stroke="#fcdb7c" stroke-width="2.1" stroke-linejoin="round" stroke-linecap="round" />
<polyline points="813.9,36 828.5,48.5 842,67.2 858.7,81.4 896.1,106.7 929.2,137.6" fill="none" stroke="#fcdb7c" stroke-width="2.1" stroke-linejoin="round" stroke-linecap="round" />
<polyline points="737.8,146.3 790,146 800,146.5 812,149 825,153.5 850,163.5 875,167.5 900,169 916.9,169" fill="none" stroke="#fcdb7c" stroke-width="2.1" stroke-linejoin="round" stroke-linecap="round" />
<polyline points="875,167.5 886.1,172 905.9,182.3 916.9,188.9" fill="none" stroke="#fcdb7c" stroke-width="2.1" stroke-linejoin="round" stroke-linecap="round" />
<polyline points="712,163.5 725.2,164.6 736.2,153.6 762.7,144.8" fill="none" stroke="#fcdb7c" stroke-width="2.1" stroke-linejoin="round" stroke-linecap="round" />
<polyline points="734,153.6 725.2,169.1 721.9,184.5 725.2,202.1 731.8,217.5 736.2,228.6 740.6,242" fill="none" stroke="#fcdb7c" stroke-width="2.1" stroke-linejoin="round" stroke-linecap="round" />
<polyline points="723.8,164.9 709.8,164.5 693.6,174.2 690,195.2 684.2,213.8 663.3,230.1 658.6,242" fill="none" stroke="#fcdb7c" stroke-width="2.1" stroke-linejoin="round" stroke-linecap="round" />
<polyline points="1000,36 995,55 983.8,65.1 965.1,83.8 954.7,104.6 954.7,123.3 958.9,136 958,150 956.6,180.1 958.8,202.1 961,219.7" fill="none" stroke="#fcdb7c" stroke-width="2.1" stroke-linejoin="round" stroke-linecap="round" />
<polyline points="925,128 930.1,136 939,144.8 952.2,158 956.6,180.1" fill="none" stroke="#fcdb7c" stroke-width="2.1" stroke-linejoin="round" stroke-linecap="round" />
<polyline points="916.9,188.9 908.1,191.1 901.5,202.1 905.9,224.1 916.9,230.8 919.1,242" fill="none" stroke="#fcdb7c" stroke-width="2.1" stroke-linejoin="round" stroke-linecap="round" />
<polyline points="916.9,164.6 930.1,153.6 945.6,149.2 965.4,144.8 985.2,140.4 1007.3,139.3 1024,139.3" fill="none" stroke="#fcdb7c" stroke-width="2.1" stroke-linejoin="round" stroke-linecap="round" />
<polyline points="939,188.9 952.2,175.7 965.4,162.4 974.2,149.2 985.2,140.4" fill="none" stroke="#fcdb7c" stroke-width="2.1" stroke-linejoin="round" stroke-linecap="round" />
<polyline points="897.1,177.9 908.1,191.1 916.9,188.9 941.2,180.1 956.6,180.1" fill="none" stroke="#fcdb7c" stroke-width="2.1" stroke-linejoin="round" stroke-linecap="round" />
<polyline points="914.7,230.8 921.3,224.1 934.6,226.3 945.6,233" fill="none" stroke="#fcdb7c" stroke-width="2.1" stroke-linejoin="round" stroke-linecap="round" />
<polyline points="921.3,136 925.7,149.2 934.6,162.4 939,188.9" fill="none" stroke="#fcdb7c" stroke-width="2.1" stroke-linejoin="round" stroke-linecap="round" />
<rect x="587.9" y="45.3" width="7.1" height="6.4" rx="0.8" fill="#1d5fc4" stroke="#fff" stroke-width="0.5"/>
<text x="591.4" y="50.7" font-size="5.5" font-weight="bold" fill="#fff" text-anchor="middle" font-family="Liberation Sans">3</text>
<rect x="786.5" y="95.6" width="9.0" height="6.4" rx="0.8" fill="#d23440" stroke="#fff" stroke-width="0.5"/>
<text x="791" y="101.0" font-size="5.5" font-weight="bold" fill="#fff" text-anchor="middle" font-family="Liberation Sans">1</text>
<rect x="886.8" y="70.5" width="9.0" height="6.4" rx="0.8" fill="#d23440" stroke="#fff" stroke-width="0.5"/>
<text x="891.3" y="75.9" font-size="5.5" font-weight="bold" fill="#fff" text-anchor="middle" font-family="Liberation Sans">1</text>
<rect x="956.2" y="68.3" width="9.0" height="6.4" rx="0.8" fill="#d23440" stroke="#fff" stroke-width="0.5"/>
<text x="960.7" y="73.7" font-size="5.5" font-weight="bold" fill="#fff" text-anchor="middle" font-family="Liberation Sans">1</text>
<rect x="867.4" y="89.2" width="9.7" height="6.4" rx="0.8" fill="#1d5fc4" stroke="#fff" stroke-width="0.5"/>
<text x="872.3" y="94.6" font-size="5.5" font-weight="bold" fill="#fff" text-anchor="middle" font-family="Liberation Sans">17</text>
<rect x="985.3" y="128.3" width="9.0" height="6.4" rx="0.8" fill="#d23440" stroke="#fff" stroke-width="0.5"/>
<text x="989.8" y="133.7" font-size="5.5" font-weight="bold" fill="#fff" text-anchor="middle" font-family="Liberation Sans">1L</text>
<rect x="954.1" y="137.3" width="7.1" height="6.4" rx="0.8" fill="#1d5fc4" stroke="#fff" stroke-width="0.5"/>
<text x="957.6" y="142.7" font-size="5.5" font-weight="bold" fill="#fff" text-anchor="middle" font-family="Liberation Sans">4</text>
<rect x="956.5" y="145.2" width="7.1" height="6.4" rx="0.8" fill="#1d5fc4" stroke="#fff" stroke-width="0.5"/>
<text x="960" y="150.6" font-size="5.5" font-weight="bold" fill="#fff" text-anchor="middle" font-family="Liberation Sans">1</text>
<rect x="891.1" y="164.4" width="7.1" height="6.4" rx="0.8" fill="#1d5fc4" stroke="#fff" stroke-width="0.5"/>
<text x="894.6" y="169.8" font-size="5.5" font-weight="bold" fill="#fff" text-anchor="middle" font-family="Liberation Sans">1</text>
<rect x="880.9" y="170.3" width="7.1" height="6.4" rx="0.8" fill="#1d5fc4" stroke="#fff" stroke-width="0.5"/>
<text x="884.4" y="175.7" font-size="5.5" font-weight="bold" fill="#fff" text-anchor="middle" font-family="Liberation Sans">3</text>
<rect x="944.1" y="174.4" width="9.0" height="6.4" rx="0.8" fill="#d23440" stroke="#fff" stroke-width="0.5"/>
<text x="948.6" y="179.8" font-size="5.5" font-weight="bold" fill="#fff" text-anchor="middle" font-family="Liberation Sans">1L</text>
<rect x="953.4" y="195.4" width="9.7" height="6.4" rx="0.8" fill="#1d5fc4" stroke="#fff" stroke-width="0.5"/>
<text x="958.2" y="200.8" font-size="5.5" font-weight="bold" fill="#fff" text-anchor="middle" font-family="Liberation Sans">17</text>
<rect x="779.0" y="142.2" width="7.1" height="6.4" rx="0.8" fill="#1d5fc4" stroke="#fff" stroke-width="0.5"/>
<text x="782.5" y="147.6" font-size="5.5" font-weight="bold" fill="#fff" text-anchor="middle" font-family="Liberation Sans">3</text>
<rect x="729.5" y="150.2" width="9.0" height="6.4" rx="0.8" fill="#d23440" stroke="#fff" stroke-width="0.5"/>
<text x="734" y="155.6" font-size="5.5" font-weight="bold" fill="#fff" text-anchor="middle" font-family="Liberation Sans">3</text>
<rect x="725.5" y="208.8" width="9.0" height="6.4" rx="0.8" fill="#d23440" stroke="#fff" stroke-width="0.5"/>
<text x="730" y="214.2" font-size="5.5" font-weight="bold" fill="#fff" text-anchor="middle" font-family="Liberation Sans">3</text>
<rect x="681.7" y="207.1" width="7.1" height="6.4" rx="0.8" fill="#1d5fc4" stroke="#fff" stroke-width="0.5"/>
<text x="685.2" y="212.5" font-size="5.5" font-weight="bold" fill="#fff" text-anchor="middle" font-family="Liberation Sans">1</text>
<text x="616.2" y="45.6" font-size="8" font-family="Liberation Sans" font-weight="normal" letter-spacing="0" text-anchor="start" fill="#fff" stroke="#fff" stroke-width="1.8" stroke-linejoin="round">Würenlos</text>
<text x="616.2" y="45.6" font-size="8" font-family="Liberation Sans" font-weight="normal" letter-spacing="0" text-anchor="start" fill="#262626" stroke="#262626" stroke-width="0.28">Würenlos</text>
<text x="587.6" y="69.3" font-size="8" font-family="Liberation Sans" font-weight="normal" letter-spacing="0" text-anchor="start" fill="#fff" stroke="#fff" stroke-width="1.8" stroke-linejoin="round">Killwangen</text>
<text x="587.6" y="69.3" font-size="8" font-family="Liberation Sans" font-weight="normal" letter-spacing="0" text-anchor="start" fill="#262626" stroke="#262626" stroke-width="0.28">Killwangen</text>
<text x="611" y="96.1" font-size="8" font-family="Liberation Sans" font-weight="normal" letter-spacing="0" text-anchor="start" fill="#fff" stroke="#fff" stroke-width="1.8" stroke-linejoin="round">Spreitenbach</text>
<text x="611" y="96.1" font-size="8" font-family="Liberation Sans" font-weight="normal" letter-spacing="0" text-anchor="start" fill="#262626" stroke="#262626" stroke-width="0.28">Spreitenbach</text>
<text x="503.8" y="90.3" font-size="8" font-family="Liberation Sans" font-weight="normal" letter-spacing="0" text-anchor="start" fill="#fff" stroke="#fff" stroke-width="1.8" stroke-linejoin="round">Niederrohrdorf</text>
<text x="503.8" y="90.3" font-size="8" font-family="Liberation Sans" font-weight="normal" letter-spacing="0" text-anchor="start" fill="#262626" stroke="#262626" stroke-width="0.28">Niederrohrdorf</text>
<text x="456.8" y="107.3" font-size="8" font-family="Liberation Sans" font-weight="normal" letter-spacing="0" text-anchor="start" fill="#fff" stroke="#fff" stroke-width="1.8" stroke-linejoin="round">Mellingen</text>
<text x="456.8" y="107.3" font-size="8" font-family="Liberation Sans" font-weight="normal" letter-spacing="0" text-anchor="start" fill="#262626" stroke="#262626" stroke-width="0.28">Mellingen</text>
<text x="546.3" y="132.2" font-size="8" font-family="Liberation Sans" font-weight="normal" letter-spacing="0" text-anchor="start" fill="#fff" stroke="#fff" stroke-width="1.8" stroke-linejoin="round">Remetschwil</text>
<text x="546.3" y="132.2" font-size="8" font-family="Liberation Sans" font-weight="normal" letter-spacing="0" text-anchor="start" fill="#262626" stroke="#262626" stroke-width="0.28">Remetschwil</text>
<text x="489.9" y="52.7" font-size="8" font-family="Liberation Sans" font-weight="normal" letter-spacing="0" text-anchor="start" fill="#fff" stroke="#fff" stroke-width="1.8" stroke-linejoin="round">F</text>
<text x="489.9" y="52.7" font-size="8" font-family="Liberation Sans" font-weight="normal" letter-spacing="0" text-anchor="start" fill="#262626" stroke="#262626" stroke-width="0.28">F</text>
<text x="471.8" y="144.3" font-size="8" font-family="Liberation Sans" font-weight="normal" letter-spacing="0" text-anchor="start" fill="#fff" stroke="#fff" stroke-width="1.8" stroke-linejoin="round">Tägerig</text>
<text x="471.8" y="144.3" font-size="8" font-family="Liberation Sans" font-weight="normal" letter-spacing="0" text-anchor="start" fill="#262626" stroke="#262626" stroke-width="0.28">Tägerig</text>
<text x="521.9" y="154.2" font-size="8" font-family="Liberation Sans" font-weight="normal" letter-spacing="0" text-anchor="start" fill="#fff" stroke="#fff" stroke-width="1.8" stroke-linejoin="round">Stetten</text>
<text x="521.9" y="154.2" font-size="8" font-family="Liberation Sans" font-weight="normal" letter-spacing="0" text-anchor="start" fill="#262626" stroke="#262626" stroke-width="0.28">Stetten</text>
<text x="484.6" y="182.4" font-size="8" font-family="Liberation Sans" font-weight="normal" letter-spacing="0" text-anchor="start" fill="#fff" stroke="#fff" stroke-width="1.8" stroke-linejoin="round">Nesselnbach</text>
<text x="484.6" y="182.4" font-size="8" font-family="Liberation Sans" font-weight="normal" letter-spacing="0" text-anchor="start" fill="#262626" stroke="#262626" stroke-width="0.28">Nesselnbach</text>
<text x="585.4" y="182.2" font-size="8" font-family="Liberation Sans" font-weight="normal" letter-spacing="0" text-anchor="start" fill="#fff" stroke="#fff" stroke-width="1.8" stroke-linejoin="round">Bellikon</text>
<text x="585.4" y="182.2" font-size="8" font-family="Liberation Sans" font-weight="normal" letter-spacing="0" text-anchor="start" fill="#262626" stroke="#262626" stroke-width="0.28">Bellikon</text>
<text x="497.1" y="213.1" font-size="8" font-family="Liberation Sans" font-weight="normal" letter-spacing="0" text-anchor="start" fill="#fff" stroke="#fff" stroke-width="1.8" stroke-linejoin="round">Niederwil</text>
<text x="497.1" y="213.1" font-size="8" font-family="Liberation Sans" font-weight="normal" letter-spacing="0" text-anchor="start" fill="#262626" stroke="#262626" stroke-width="0.28">Niederwil</text>
<text x="500.4" y="226.4" font-size="8" font-family="Liberation Sans" font-weight="normal" letter-spacing="0" text-anchor="start" fill="#fff" stroke="#fff" stroke-width="1.8" stroke-linejoin="round">Fischbach-Göslikon</text>
<text x="500.4" y="226.4" font-size="8" font-family="Liberation Sans" font-weight="normal" letter-spacing="0" text-anchor="start" fill="#262626" stroke="#262626" stroke-width="0.28">Fischbach-Göslikon</text>
<text x="621.6" y="236.9" font-size="8" font-family="Liberation Sans" font-weight="normal" letter-spacing="0" text-anchor="start" fill="#fff" stroke="#fff" stroke-width="1.8" stroke-linejoin="round">Widen</text>
<text x="621.6" y="236.9" font-size="8" font-family="Liberation Sans" font-weight="normal" letter-spacing="0" text-anchor="start" fill="#262626" stroke="#262626" stroke-width="0.28">Widen</text>
<text x="750.6" y="50.6" font-size="8" font-family="Liberation Sans" font-weight="normal" letter-spacing="0" text-anchor="start" fill="#fff" stroke="#fff" stroke-width="1.8" stroke-linejoin="round">Dällikon</text>
<text x="750.6" y="50.6" font-size="8" font-family="Liberation Sans" font-weight="normal" letter-spacing="0" text-anchor="start" fill="#262626" stroke="#262626" stroke-width="0.28">Dällikon</text>
<text x="792" y="44.3" font-size="8" font-family="Liberation Sans" font-weight="normal" letter-spacing="0" text-anchor="start" fill="#fff" stroke="#fff" stroke-width="1.8" stroke-linejoin="round">Regensdorf</text>
<text x="792" y="44.3" font-size="8" font-family="Liberation Sans" font-weight="normal" letter-spacing="0" text-anchor="start" fill="#262626" stroke="#262626" stroke-width="0.28">Regensdorf</text>
<text x="700" y="91.3" font-size="8" font-family="Liberation Sans" font-weight="normal" letter-spacing="0" text-anchor="start" fill="#fff" stroke="#fff" stroke-width="1.8" stroke-linejoin="round">Geroldswil</text>
<text x="700" y="91.3" font-size="8" font-family="Liberation Sans" font-weight="normal" letter-spacing="0" text-anchor="start" fill="#262626" stroke="#262626" stroke-width="0.28">Geroldswil</text>
<text x="740.1" y="102.3" font-size="8" font-family="Liberation Sans" font-weight="normal" letter-spacing="0" text-anchor="start" fill="#fff" stroke="#fff" stroke-width="1.8" stroke-linejoin="round">Weiningen</text>
<text x="740.1" y="102.3" font-size="8" font-family="Liberation Sans" font-weight="normal" letter-spacing="0" text-anchor="start" fill="#262626" stroke="#262626" stroke-width="0.28">Weiningen</text>
<text x="753.5" y="118.7" font-size="8" font-family="Liberation Sans" font-weight="normal" letter-spacing="0" text-anchor="start" fill="#fff" stroke="#fff" stroke-width="1.8" stroke-linejoin="round">Unterengstringen</text>
<text x="753.5" y="118.7" font-size="8" font-family="Liberation Sans" font-weight="normal" letter-spacing="0" text-anchor="start" fill="#262626" stroke="#262626" stroke-width="0.28">Unterengstringen</text>
<text x="779.5" y="130.4" font-size="8" font-family="Liberation Sans" font-weight="normal" letter-spacing="0" text-anchor="start" fill="#fff" stroke="#fff" stroke-width="1.8" stroke-linejoin="round">Oberengstringen</text>
<text x="779.5" y="130.4" font-size="8" font-family="Liberation Sans" font-weight="normal" letter-spacing="0" text-anchor="start" fill="#262626" stroke="#262626" stroke-width="0.28">Oberengstringen</text>
<text x="683.3" y="140.4" font-size="8" font-family="Liberation Sans" font-weight="normal" letter-spacing="0" text-anchor="start" fill="#fff" stroke="#fff" stroke-width="1.8" stroke-linejoin="round">Dietikon</text>
<text x="683.3" y="140.4" font-size="8" font-family="Liberation Sans" font-weight="normal" letter-spacing="0" text-anchor="start" fill="#262626" stroke="#262626" stroke-width="0.28">Dietikon</text>
<text x="767.4" y="158.7" font-size="8" font-family="Liberation Sans" font-weight="normal" letter-spacing="0" text-anchor="start" fill="#fff" stroke="#fff" stroke-width="1.8" stroke-linejoin="round">Schlieren</text>
<text x="767.4" y="158.7" font-size="8" font-family="Liberation Sans" font-weight="normal" letter-spacing="0" text-anchor="start" fill="#262626" stroke="#262626" stroke-width="0.28">Schlieren</text>
<text x="658.7" y="171.3" font-size="8" font-family="Liberation Sans" font-weight="normal" letter-spacing="0" text-anchor="start" fill="#fff" stroke="#fff" stroke-width="1.8" stroke-linejoin="round">Bergdietikon</text>
<text x="658.7" y="171.3" font-size="8" font-family="Liberation Sans" font-weight="normal" letter-spacing="0" text-anchor="start" fill="#262626" stroke="#262626" stroke-width="0.28">Bergdietikon</text>
<text x="722.8" y="188.3" font-size="8" font-family="Liberation Sans" font-weight="normal" letter-spacing="0" text-anchor="start" fill="#fff" stroke="#fff" stroke-width="1.8" stroke-linejoin="round">Urdorf</text>
<text x="722.8" y="188.3" font-size="8" font-family="Liberation Sans" font-weight="normal" letter-spacing="0" text-anchor="start" fill="#262626" stroke="#262626" stroke-width="0.28">Urdorf</text>
<text x="777" y="229.3" font-size="8" font-family="Liberation Sans" font-weight="normal" letter-spacing="0" text-anchor="start" fill="#fff" stroke="#fff" stroke-width="1.8" stroke-linejoin="round">Uitikon</text>
<text x="777" y="229.3" font-size="8" font-family="Liberation Sans" font-weight="normal" letter-spacing="0" text-anchor="start" fill="#262626" stroke="#262626" stroke-width="0.28">Uitikon</text>
<text x="977.3" y="63.7" font-size="8" font-family="Liberation Sans" font-weight="normal" letter-spacing="0" text-anchor="start" fill="#fff" stroke="#fff" stroke-width="1.8" stroke-linejoin="round">Opfik</text>
<text x="977.3" y="63.7" font-size="8" font-family="Liberation Sans" font-weight="normal" letter-spacing="0" text-anchor="start" fill="#262626" stroke="#262626" stroke-width="0.28">Opfik</text>
<text x="865.5" y="127.5" font-size="8.4" font-family="Liberation Sans" font-weight="normal" letter-spacing="0" text-anchor="start" fill="#fff" stroke="#fff" stroke-width="1.8" stroke-linejoin="round">Käferberg</text>
<text x="865.5" y="127.5" font-size="8.4" font-family="Liberation Sans" font-weight="normal" letter-spacing="0" text-anchor="start" fill="#1f8a3c" stroke="#1f8a3c" stroke-width="0.28">Käferberg</text>
<text x="956.8" y="178.6" font-size="8.6" font-family="Liberation Sans" font-weight="normal" letter-spacing="0" text-anchor="start" fill="#fff" stroke="#fff" stroke-width="1.8" stroke-linejoin="round">Zoo Zürich</text>
<text x="956.8" y="178.6" font-size="8.6" font-family="Liberation Sans" font-weight="normal" letter-spacing="0" text-anchor="start" fill="#1f8a3c" stroke="#1f8a3c" stroke-width="0.28">Zoo Zürich</text>
<text x="928.4" y="216.1" font-size="13.2" font-family="Liberation Sans" font-weight="normal" letter-spacing="0" text-anchor="start" fill="#fff" stroke="#fff" stroke-width="1.8" stroke-linejoin="round">Zürich</text>
<text x="928.4" y="216.1" font-size="13.2" font-family="Liberation Sans" font-weight="normal" letter-spacing="0" text-anchor="start" fill="#2b2b2b" stroke="#2b2b2b" stroke-width="0.28">Zürich</text>
<text x="814" y="184.9" font-size="8.2" font-family="Liberation Sans" font-weight="bold" letter-spacing="0.85" text-anchor="start" fill="#fff" stroke="#fff" stroke-width="1.8" stroke-linejoin="round">ALTSTETTEN</text>
<text x="814" y="184.9" font-size="8.2" font-family="Liberation Sans" font-weight="bold" letter-spacing="0.85" text-anchor="start" fill="#3f4a63" stroke="#3f4a63" stroke-width="0.1">ALTSTETTEN</text>
<text x="855.6" y="148.4" font-size="8.2" font-family="Liberation Sans" font-weight="bold" letter-spacing="0.9" text-anchor="start" fill="#fff" stroke="#fff" stroke-width="1.8" stroke-linejoin="round">HÖNGG</text>
<text x="855.6" y="148.4" font-size="8.2" font-family="Liberation Sans" font-weight="bold" letter-spacing="0.9" text-anchor="start" fill="#3f4a63" stroke="#3f4a63" stroke-width="0.1">HÖNGG</text>
<text x="918.8" y="97.6" font-size="8.2" font-family="Liberation Sans" font-weight="bold" letter-spacing="1.1" text-anchor="start" fill="#fff" stroke="#fff" stroke-width="1.8" stroke-linejoin="round">SEEBACH</text>
<text x="918.8" y="97.6" font-size="8.2" font-family="Liberation Sans" font-weight="bold" letter-spacing="1.1" text-anchor="start" fill="#3f4a63" stroke="#3f4a63" stroke-width="0.1">SEEBACH</text>
<text x="928.8" y="130.0" font-size="8.2" font-family="Liberation Sans" font-weight="bold" letter-spacing="1.0" text-anchor="start" fill="#fff" stroke="#fff" stroke-width="1.8" stroke-linejoin="round">OERLIKON</text>
<text x="928.8" y="130.0" font-size="8.2" font-family="Liberation Sans" font-weight="bold" letter-spacing="1.0" text-anchor="start" fill="#3f4a63" stroke="#3f4a63" stroke-width="0.1">OERLIKON</text>
<text x="937.6" y="117.0" font-size="5.2" font-family="Liberation Sans" font-weight="bold" letter-spacing="0.3" text-anchor="start" fill="#fff" stroke="#fff" stroke-width="1.8" stroke-linejoin="round">DISTRICT 11</text>
<text x="937.6" y="117.0" font-size="5.2" font-family="Liberation Sans" font-weight="bold" letter-spacing="0.3" text-anchor="start" fill="#3f4a63" stroke="#3f4a63" stroke-width="0.1">DISTRICT 11</text>
<text x="870.1" y="103.1" font-size="5.2" font-family="Liberation Sans" font-weight="bold" letter-spacing="0.3" text-anchor="start" fill="#fff" stroke="#fff" stroke-width="1.8" stroke-linejoin="round">AFFOLTERN</text>
<text x="870.1" y="103.1" font-size="5.2" font-family="Liberation Sans" font-weight="bold" letter-spacing="0.3" text-anchor="start" fill="#3f4a63" stroke="#3f4a63" stroke-width="0.1">AFFOLTERN</text>
<text x="824.5" y="77.8" font-size="5.2" font-family="Liberation Sans" font-weight="bold" letter-spacing="0.3" text-anchor="start" fill="#fff" stroke="#fff" stroke-width="1.8" stroke-linejoin="round">ALTBURG</text>
<text x="824.5" y="77.8" font-size="5.2" font-family="Liberation Sans" font-weight="bold" letter-spacing="0.3" text-anchor="start" fill="#3f4a63" stroke="#3f4a63" stroke-width="0.1">ALTBURG</text>
<text x="894.2" y="204.4" font-size="5.2" font-family="Liberation Sans" font-weight="bold" letter-spacing="0.3" text-anchor="start" fill="#fff" stroke="#fff" stroke-width="1.8" stroke-linejoin="round">AUSSERSIHL</text>
<text x="894.2" y="204.4" font-size="5.2" font-family="Liberation Sans" font-weight="bold" letter-spacing="0.3" text-anchor="start" fill="#3f4a63" stroke="#3f4a63" stroke-width="0.1">AUSSERSIHL</text>
<text x="990" y="211.2" font-size="5.2" font-family="Liberation Sans" font-weight="bold" letter-spacing="0.3" text-anchor="start" fill="#fff" stroke="#fff" stroke-width="1.8" stroke-linejoin="round">DISTRICT 7</text>
<text x="990" y="211.2" font-size="5.2" font-family="Liberation Sans" font-weight="bold" letter-spacing="0.3" text-anchor="start" fill="#3f4a63" stroke="#3f4a63" stroke-width="0.1">DISTRICT 7</text>
<text x="980.8" y="226.1" font-size="5.2" font-family="Liberation Sans" font-weight="bold" letter-spacing="0.3" text-anchor="start" fill="#fff" stroke="#fff" stroke-width="1.8" stroke-linejoin="round">HOTTINGEN</text>
<text x="980.8" y="226.1" font-size="5.2" font-family="Liberation Sans" font-weight="bold" letter-spacing="0.3" text-anchor="start" fill="#3f4a63" stroke="#3f4a63" stroke-width="0.1">HOTTINGEN</text>
<text x="0" y="0" font-size="5.2" font-family="Liberation Sans" fill="#5a5a5a" font-weight="bold" letter-spacing="0.3" transform="translate(652,66) rotate(-63)" stroke="#fff" stroke-width="1.2" paint-order="stroke">AARGAU</text>
<text x="0" y="0" font-size="5.2" font-family="Liberation Sans" fill="#5a5a5a" font-weight="bold" letter-spacing="0.3" transform="translate(676,77) rotate(-62)" stroke="#fff" stroke-width="1.2" paint-order="stroke">ZURICH</text>
<path d="M909.8,130.2 C907.8,126.2 904.3,123.2 904.3,120.2 A5.5,5.5 0 1 1 915.3,120.2 C915.3,123.2 911.8,126.2 909.8,130.2 Z" fill="#2f9a4c" transform="translate(0,-1)"/>
<path d="M906.8,122.2 L909.3,118.2 L910.8,120.2 L911.8,119.2 L913.3,122.2 Z" fill="#fff" transform="translate(0,-1.5)"/>
<path d="M1004.8,181.3 C1002.8,177.3 999.3,174.3 999.3,171.3 A5.5,5.5 0 1 1 1010.3,171.3 C1010.3,174.3 1006.8,177.3 1004.8,181.3 Z" fill="#2f9a4c" transform="translate(0,-1)"/>
<path d="M1001.8,173.3 L1004.3,169.3 L1005.8,171.3 L1006.8,170.3 L1008.3,173.3 Z" fill="#fff" transform="translate(0,-1.5)"/>
<rect x="453" y="36" width="113" height="1.2" fill="#f3e3a0"/>
<polyline points="645.3,72.4 636.5,81.8 646.7,90.6 664.9,109.5 672.2,111 681.7,100.8 683.1,92.8 681,90.3 695.5,93.5 712,98 728.6,106.7 751.5,121.3 770.2,123.4 789,127.5 799.4,133.8 815.8,141.6 824.1,147.4 831.6,152.4 829.1,156.6 828.3,161.6 824.6,164.9" fill="none" stroke="#2aaed3" stroke-width="4.4" stroke-linejoin="round" stroke-linecap="round" />
<polyline points="682.5,99 691.1,108 702.8,119.7 710,130 725,141 736,146" fill="none" stroke="#2aaed3" stroke-width="4.4" stroke-linejoin="round" stroke-linecap="round" />
<circle cx="681" cy="90.3" r="2.8" fill="#2aaed3"/>
<circle cx="824.6" cy="164.9" r="2.4" fill="#2aaed3"/>
<circle cx="649.6" cy="77.5" r="2.6" fill="#2a6fd0"/>
<g transform="translate(647,89) rotate(55)"><rect x="-4.6" y="-2.7" width="9.2" height="5.4" fill="#1b3d8f"/><path d="M-2.4,0 H2.4 M0.6,-1.5 L2.4,0 L0.6,1.5" stroke="#fff" stroke-width="0.9" fill="none"/></g>
<g transform="translate(665.2,109.2) rotate(15)"><rect x="-4.6" y="-2.7" width="9.2" height="5.4" fill="#1b3d8f"/><path d="M-2.4,0 H2.4 M0.6,-1.5 L2.4,0 L0.6,1.5" stroke="#fff" stroke-width="0.9" fill="none"/></g>
<g transform="translate(709.3,97.4) rotate(25)"><rect x="-4.6" y="-2.7" width="9.2" height="5.4" fill="#1b3d8f"/><path d="M-2.4,0 H2.4 M0.6,-1.5 L2.4,0 L0.6,1.5" stroke="#fff" stroke-width="0.9" fill="none"/></g>
<g transform="translate(794.6,131) rotate(35)"><rect x="-4.6" y="-2.7" width="9.2" height="5.4" fill="#1b3d8f"/><path d="M-2.4,0 H2.4 M0.6,-1.5 L2.4,0 L0.6,1.5" stroke="#fff" stroke-width="0.9" fill="none"/></g>
<g transform="translate(832.5,166.5) rotate(20)"><rect x="-4.6" y="-2.7" width="9.2" height="5.4" fill="#1b3d8f"/><path d="M-2.4,0 H2.4 M0.6,-1.5 L2.4,0 L0.6,1.5" stroke="#fff" stroke-width="0.9" fill="none"/></g>
<path d="M737.2,146.7 C735.7,143.2 730.2,140.2 730.2,135.2 A7,7 0 1 1 744.2,135.2 C744.2,140.2 738.7,143.2 737.2,146.7 Z" fill="#fff" stroke="#1c49a0" stroke-width="1.1"/>
<text x="737.2" y="138.2" font-size="8.5" font-weight="bold" fill="#1c49a0" text-anchor="middle" font-family="Liberation Sans">B</text>
<path d="M840.2,170.7 C838.7,167.2 833.2,164.2 833.2,159.2 A7,7 0 1 1 847.2,159.2 C847.2,164.2 841.7,167.2 840.2,170.7 Z" fill="#fff" stroke="#1c49a0" stroke-width="1.1"/>
<text x="840.2" y="162.2" font-size="8.5" font-weight="bold" fill="#1c49a0" text-anchor="middle" font-family="Liberation Sans">A</text>
<rect x="453" y="47" width="23.3" height="26.6" fill="#fff" filter="url(#sh)"/>
<rect x="493.8" y="47" width="82" height="26.6" fill="#fff" filter="url(#sh)"/>
<line x1="521.4" y1="47" x2="521.4" y2="73.6" stroke="#e8e8e8" stroke-width="0.8"/>
<line x1="548.4" y1="47" x2="548.4" y2="73.6" stroke="#e8e8e8" stroke-width="0.8"/>
<polyline points="467,56.5 463.5,60.2 467,63.9" fill="none" stroke="#666" stroke-width="1.3"/>
<polygon points="503.5,55.8 512,60.3 503.5,64.8" fill="#999"/>
<polygon points="529.6,56.3 534.4,60.3 529.6,64.3" fill="#999"/><polygon points="534.6,56.3 539.4,60.3 534.6,64.3" fill="#999"/>
<polygon points="554,56.3 558.6,60.3 554,64.3" fill="#999"/><polygon points="558.8,56.3 563.4,60.3 558.8,64.3" fill="#999"/><polygon points="563.6,56.3 568.2,60.3 563.6,64.3" fill="#999"/>
<rect x="996" y="41.2" width="23.8" height="23.9" fill="#fff" filter="url(#sh)"/>
<path d="M1003,51 V48 H1006 M1009.5,48 H1012.5 V51 M1012.5,55 V58 H1009.5 M1006,58 H1003 V55" fill="none" stroke="#555" stroke-width="1.4"/>
<rect x="999" y="77.2" width="20.8" height="45.2" fill="#fff" filter="url(#sh)"/>
<line x1="1002" y1="100.4" x2="1017" y2="100.4" stroke="#e6e6e6" stroke-width="0.8"/>
<path d="M1006,89.2 H1016 M1011,84.2 V94.2" stroke="#333" stroke-width="1.8"/>
<path d="M1006,113.8 H1016" stroke="#333" stroke-width="1.8"/>
<rect x="1006.5" y="132.5" width="20" height="16.7" fill="#fff" filter="url(#sh)"/>
<rect x="1012.6" y="136.5" width="4.4" height="7.4" rx="1.6" fill="#222"/><circle cx="1014.8" cy="138.3" r="0.7" fill="#fff"/><circle cx="1014.8" cy="140.2" r="0.7" fill="#fff"/><circle cx="1014.8" cy="142.1" r="0.7" fill="#fff"/>
<rect x="1006.5" y="155.3" width="20" height="16.7" fill="#fff" filter="url(#sh)"/>
<path d="M1011.5,160 H1016.5 M1011.5,160 V167.5" stroke="#555" stroke-width="0.9" fill="none" stroke-dasharray="1,0.6"/>
<rect x="1006.5" y="178.7" width="20" height="16.3" fill="#fff" filter="url(#sh)"/>
<circle cx="1014.6" cy="186.8" r="3.3" fill="none" stroke="#333" stroke-width="1.1" stroke-dasharray="2.2,0.9"/>
<rect x="951.6" y="217.3" width="26.3" height="30" fill="#fff" filter="url(#sh)"/>
<polyline points="960.8,225.5 964.7,229.3 968.6,225.5" fill="none" stroke="#666" stroke-width="1.3"/>
</svg>
</div>

<!-- legend -->
<div class="abs" style="left:0;top:240.6px;width:1024px;height:30px;background:#fff;border-bottom:1px solid #e6e6e6;box-shadow:0 -1px 2px rgba(0,0,0,0.08)"></div>
<svg class="abs" style="left:11px;top:249px" width="8" height="13"><circle cx="4" cy="2" r="1.3" fill="#222"/><circle cx="4" cy="6.5" r="1.3" fill="#222"/><circle cx="4" cy="11" r="1.3" fill="#222"/></svg>
<div class="abs" style="left:27px;top:241px;width:1px;height:29px;background:#e6e6e6"></div>
<div class="abs" style="left:102px;top:241px;width:1px;height:29px;background:#e6e6e6"></div>
<div class="abs" style="left:235.5px;top:241px;width:1px;height:29px;background:#e6e6e6"></div>
<div class="abs" style="left:349.5px;top:241px;width:1px;height:29px;background:#e6e6e6"></div>
<div class="abs" style="left:524.5px;top:241px;width:1px;height:29px;background:#e6e6e6"></div>
<div class="dot" style="left:38.8px;background:#2563bd"></div><div class="lg" style="left:51.8px;transform:scaleX(0.9);transform-origin:0 50%">GPS Speed</div>
<div class="dot" style="left:114.3px;background:#f6a82c"></div><div class="lg" style="left:127px;transform:scaleX(0.98);transform-origin:0 50%">Trailers Lateral acceleration</div>
<div class="dot" style="left:247.6px;background:#5cb56e"></div><div class="lg" style="left:260.2px;transform:scaleX(0.975);transform-origin:0 50%">Trailers Axle load</div>
<div class="dot" style="left:361.5px;background:#d93a3a"></div><div class="lg" style="left:374.3px;transform:scaleX(0.978);transform-origin:0 50%">Trailers High resolution vehicle distance</div>

<!-- charts -->
<svg class="abs" style="left:0;top:0" width="1024" height="481" viewBox="0 0 1024 481">
<defs>
<linearGradient id="gb" x1="0" y1="271" x2="0" y2="319.5" gradientUnits="userSpaceOnUse"><stop offset="0" stop-color="#2563bd" stop-opacity="0.32"/><stop offset="0.5" stop-color="#2563bd" stop-opacity="0.10"/><stop offset="1" stop-color="#2563bd" stop-opacity="0.0"/></linearGradient>
<linearGradient id="go" x1="0" y1="321" x2="0" y2="368.5" gradientUnits="userSpaceOnUse"><stop offset="0" stop-color="#f6a82c" stop-opacity="0.22"/><stop offset="1" stop-color="#f6a82c" stop-opacity="0.0"/></linearGradient>
<linearGradient id="gg" x1="0" y1="369" x2="0" y2="416.5" gradientUnits="userSpaceOnUse"><stop offset="0" stop-color="#4caf5f" stop-opacity="0.30"/><stop offset="1" stop-color="#4caf5f" stop-opacity="0.0"/></linearGradient>
<linearGradient id="gr" x1="0" y1="417" x2="0" y2="464" gradientUnits="userSpaceOnUse"><stop offset="0" stop-color="#d8302f" stop-opacity="0.27"/><stop offset="1" stop-color="#d8302f" stop-opacity="0.0"/></linearGradient>
</defs>
<line x1="0" y1="319.5" x2="1024" y2="319.5" stroke="#e8e8e8" stroke-width="1"/>
<line x1="0" y1="368.5" x2="1024" y2="368.5" stroke="#e8e8e8" stroke-width="1"/>
<line x1="0" y1="416.5" x2="1024" y2="416.5" stroke="#e8e8e8" stroke-width="1"/>
<line x1="42.5" y1="464.2" x2="1021" y2="464.2" stroke="#e4e4e4" stroke-width="1"/>
<line x1="42.5" y1="271" x2="42.5" y2="464.2" stroke="#e8e8e8" stroke-width="1"/>
<line x1="42.5" y1="464.2" x2="42.5" y2="468" stroke="#ddd" stroke-width="1"/>
<line x1="145.5" y1="464.2" x2="145.5" y2="468" stroke="#ddd" stroke-width="1"/>
<line x1="248.5" y1="464.2" x2="248.5" y2="468" stroke="#ddd" stroke-width="1"/>
<line x1="351.5" y1="464.2" x2="351.5" y2="468" stroke="#ddd" stroke-width="1"/>
<line x1="454.5" y1="464.2" x2="454.5" y2="468" stroke="#ddd" stroke-width="1"/>
<line x1="557.5" y1="464.2" x2="557.5" y2="468" stroke="#ddd" stroke-width="1"/>
<line x1="660.5" y1="464.2" x2="660.5" y2="468" stroke="#ddd" stroke-width="1"/>
<line x1="763.5" y1="464.2" x2="763.5" y2="468" stroke="#ddd" stroke-width="1"/>
<line x1="866.5" y1="464.2" x2="866.5" y2="468" stroke="#ddd" stroke-width="1"/>
<line x1="969.5" y1="464.2" x2="969.5" y2="468" stroke="#ddd" stroke-width="1"/>
<polygon points="42.7,319.5 42.7,319.3 157.6,319.3 165.8,316 170.7,291.2 176.2,304.8 180.8,301 190.4,301 196.7,298.8 201.9,308.9 206.8,297.4 212.3,300.2 217.7,300.7 222.7,309.8 227.6,311.1 233.1,273.7 238.3,271.5 243.7,272 248.6,271.5 257.4,272.6 264.2,276.4 269.7,276.4 273.8,275.3 279.3,277 289.4,297.4 294.3,302.9 299.8,306.5 305.1,319.3 310.3,292.3 315.3,319 320.5,302.6 325.6,296.8 330.8,307 335.8,319.3 341,295.4 346.1,305 351.3,316.9 356.3,293.1 361.5,304.3 366.6,296.1 371.8,302.2 376.8,314.5 382,319.3 773.7,319.3 778.5,316.9 783.9,315 789,308.1 794.2,310.4 799.4,319.3 804.4,307.3 809.5,319.3 814.7,311.1 819.9,290.6 824.9,303.6 830,305.9 835.2,299.5 840.4,319.3 845.5,312.5 850.6,319.3 855.7,313.6 860.9,319.3 866,313.2 871,319.3 881.7,319.3 886.5,303.6 892,310.2 897.2,300.7 902.4,307.2 907.3,319 912.5,314.7 917.5,319 922.7,310.5 928,293.7 933.2,304.6 938.4,309.8 943.4,293.7 948.6,315.7 953.9,319.4 958.7,316.4 963.9,304 969.2,310.8 974.4,298.1 979.6,290.2 984.5,286.7 989.7,307.2 994.7,289.3 999.9,318.6 1005.2,310.2 1010.4,319.6 1015.6,292.8 1020.9,319 1020.9,319.5" fill="url(#gb)"/>
<polygon points="42.9,368.5 42.9,344.2 175.7,344.2 181.6,332.7 186.5,330.2 191.4,328.2 196.3,332.7 207,353.2 211.9,355.7 217.3,341.9 222.6,360.6 227.5,348.3 232.4,345.8 237.8,340.5 243.3,345.4 248.6,343 253.4,340.5 258.9,345.4 263.6,342.5 268.7,345.4 279.2,345.4 284.3,341.5 289.6,361.4 294.5,350.9 299.3,365.3 304.6,340.5 310.1,345.4 315.4,342.5 320.2,358.1 325.7,331.7 330.6,338.6 335.5,341.1 341.3,341.1 346.2,339.5 351.1,342.5 356.6,340.5 361.4,364.5 366.7,341.5 371.6,352.2 376.9,341.5 382.3,341.5 387.2,340.1 397,340.1 402.3,343.4 407.7,341.5 412.6,344.3 480,344.3 485.4,343 490,344.3 778.8,344.3 783.9,338.7 789.1,340.6 794.5,322.6 799.3,343.1 804.5,344.6 809.6,340.6 814.7,322.6 819.8,346.5 825,352.3 830.1,350 835.2,346.5 840.3,342.7 845.5,340.9 851,345.6 855.7,346.5 861.3,346.5 866,347.5 871.5,341.6 881.4,341.6 886.3,348.6 892,350.2 897.2,332.9 902.5,340.6 917.3,343.4 922.9,364.5 927.8,343.4 933.2,334 938.8,338.8 947.5,342 953.8,342.4 963.7,345.5 969.3,341.6 974.2,344.5 979.6,340.6 984.3,343.4 989.7,341.3 995.3,342.4 1000.2,340.6 1005.2,339.6 1010.1,341.3 1015.3,341.6 1020.6,344.4 1020.6,368.5" fill="url(#go)"/>
<polygon points="42.9,416.5 42.9,383 45.9,384 83,384 89.8,382.4 98.6,382.4 103.5,384 139.6,384 145.5,385.9 155.2,385.9 165,384 211.9,384 217.7,382.6 396.6,382.6 403.4,384 411.3,384.8 419.1,385.5 428.8,386.9 438.6,386.9 449.3,384.8 454.2,411.3 459.7,391.4 464,390.4 469.8,390.4 474.7,388.1 788.9,388.1 794.4,372.2 799.1,372.2 805.3,370.6 809.2,370.6 815.5,372.2 840.5,372.2 845.2,370.9 855.3,370.9 860.8,369.8 867.8,371.1 876.4,369.8 881.6,368.6 886.9,371.1 1021,371.1 1021,416.5" fill="url(#gg)"/>
<polygon points="42.9,464 42.9,461.8 166,461.8 195.3,459.8 230.4,456.8 283.2,442.2 297.8,442.2 330,439.8 376.9,434.3 788.5,434.3 811.9,432.5 835.3,430.8 882.2,430.2 914.4,427.2 946.7,424.3 973,423.1 996.5,419.3 1019.9,417 1019.9,464" fill="url(#gr)"/>
<polyline points="42.7,319.3 157.6,319.3 165.8,316 170.7,291.2 176.2,304.8 180.8,301 190.4,301 196.7,298.8 201.9,308.9 206.8,297.4 212.3,300.2 217.7,300.7 222.7,309.8 227.6,311.1 233.1,273.7 238.3,271.5 243.7,272 248.6,271.5 257.4,272.6 264.2,276.4 269.7,276.4 273.8,275.3 279.3,277 289.4,297.4 294.3,302.9 299.8,306.5 305.1,319.3 310.3,292.3 315.3,319 320.5,302.6 325.6,296.8 330.8,307 335.8,319.3 341,295.4 346.1,305 351.3,316.9 356.3,293.1 361.5,304.3 366.6,296.1 371.8,302.2 376.8,314.5 382,319.3 773.7,319.3 778.5,316.9 783.9,315 789,308.1 794.2,310.4 799.4,319.3 804.4,307.3 809.5,319.3 814.7,311.1 819.9,290.6 824.9,303.6 830,305.9 835.2,299.5 840.4,319.3 845.5,312.5 850.6,319.3 855.7,313.6 860.9,319.3 866,313.2 871,319.3 881.7,319.3 886.5,303.6 892,310.2 897.2,300.7 902.4,307.2 907.3,319 912.5,314.7 917.5,319 922.7,310.5 928,293.7 933.2,304.6 938.4,309.8 943.4,293.7 948.6,315.7 953.9,319.4 958.7,316.4 963.9,304 969.2,310.8 974.4,298.1 979.6,290.2 984.5,286.7 989.7,307.2 994.7,289.3 999.9,318.6 1005.2,310.2 1010.4,319.6 1015.6,292.8 1020.9,319" fill="none" stroke="#1f5db3" stroke-width="1.3" stroke-linejoin="round"/>
<polyline points="42.9,344.2 175.7,344.2 181.6,332.7 186.5,330.2 191.4,328.2 196.3,332.7 207,353.2 211.9,355.7 217.3,341.9 222.6,360.6 227.5,348.3 232.4,345.8 237.8,340.5 243.3,345.4 248.6,343 253.4,340.5 258.9,345.4 263.6,342.5 268.7,345.4 279.2,345.4 284.3,341.5 289.6,361.4 294.5,350.9 299.3,365.3 304.6,340.5 310.1,345.4 315.4,342.5 320.2,358.1 325.7,331.7 330.6,338.6 335.5,341.1 341.3,341.1 346.2,339.5 351.1,342.5 356.6,340.5 361.4,364.5 366.7,341.5 371.6,352.2 376.9,341.5 382.3,341.5 387.2,340.1 397,340.1 402.3,343.4 407.7,341.5 412.6,344.3 480,344.3 485.4,343 490,344.3 778.8,344.3 783.9,338.7 789.1,340.6 794.5,322.6 799.3,343.1 804.5,344.6 809.6,340.6 814.7,322.6 819.8,346.5 825,352.3 830.1,350 835.2,346.5 840.3,342.7 845.5,340.9 851,345.6 855.7,346.5 861.3,346.5 866,347.5 871.5,341.6 881.4,341.6 886.3,348.6 892,350.2 897.2,332.9 902.5,340.6 917.3,343.4 922.9,364.5 927.8,343.4 933.2,334 938.8,338.8 947.5,342 953.8,342.4 963.7,345.5 969.3,341.6 974.2,344.5 979.6,340.6 984.3,343.4 989.7,341.3 995.3,342.4 1000.2,340.6 1005.2,339.6 1010.1,341.3 1015.3,341.6 1020.6,344.4" fill="none" stroke="#f5a623" stroke-width="1.3" stroke-linejoin="round"/>
<polyline points="42.9,383 45.9,384 83,384 89.8,382.4 98.6,382.4 103.5,384 139.6,384 145.5,385.9 155.2,385.9 165,384 211.9,384 217.7,382.6 396.6,382.6 403.4,384 411.3,384.8 419.1,385.5 428.8,386.9 438.6,386.9 449.3,384.8 454.2,411.3 459.7,391.4 464,390.4 469.8,390.4 474.7,388.1 788.9,388.1 794.4,372.2 799.1,372.2 805.3,370.6 809.2,370.6 815.5,372.2 840.5,372.2 845.2,370.9 855.3,370.9 860.8,369.8 867.8,371.1 876.4,369.8 881.6,368.6 886.9,371.1 1021,371.1" fill="none" stroke="#4dad62" stroke-width="1.3" stroke-linejoin="round"/>
<polyline points="42.9,461.8 166,461.8 195.3,459.8 230.4,456.8 283.2,442.2 297.8,442.2 330,439.8 376.9,434.3 788.5,434.3 811.9,432.5 835.3,430.8 882.2,430.2 914.4,427.2 946.7,424.3 973,423.1 996.5,419.3 1019.9,417" fill="none" stroke="#d42f2f" stroke-width="1.3" stroke-linejoin="round"/>
</svg>
<div class="yl" style="top:275.8px">89 km/h</div>
<div class="yl" style="top:307.6px">0 km/h</div>
<div class="yl" style="top:324.7px">2.10</div>
<div class="yl" style="top:355.4px">-2.20</div>
<div class="yl" style="top:372px">5,900</div>
<div class="yl" style="top:403.9px">1,900</div>
<div class="yl" style="top:421px">939,200</div>
<div class="yl" style="top:451.6px">917,230</div>
<div class="xl" style="left:2.5px">15/4/2021 09:16</div>
<div class="xl" style="left:105.5px">15/4/2021 09:31</div>
<div class="xl" style="left:208.5px">15/4/2021 09:41</div>
<div class="xl" style="left:311.5px">15/4/2021 09:50</div>
<div class="xl" style="left:414.5px">15/4/2021 10:10</div>
<div class="xl" style="left:517.5px">15/4/2021 16:05</div>
<div class="xl" style="left:620.5px">15/4/2021 16:15</div>
<div class="xl" style="left:723.5px">15/4/2021 16:25</div>
<div class="xl" style="left:826.5px">15/4/2021 16:34</div>
<div class="xl" style="left:929.5px">15/4/2021 16:43</div>
</div>
</body></html>
